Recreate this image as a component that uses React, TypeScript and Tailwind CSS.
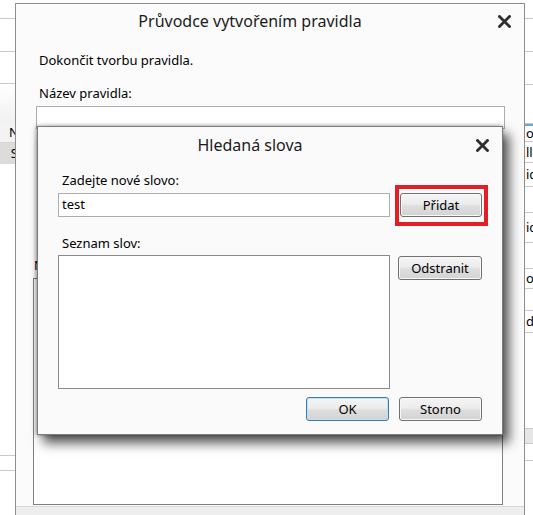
import React from "react";

const CloseX: React.FC = () => (
  <svg width="13" height="13" viewBox="0 0 13 13" className="block">
    <path d="M1.5 1.5 L11.5 11.5 M11.5 1.5 L1.5 11.5" stroke="#2e2e2e" strokeWidth="2.8" strokeLinecap="square" />
  </svg>
);

interface WinButtonProps {
  label: string;
  width: string;
  primary?: boolean;
}

const WinButton: React.FC<WinButtonProps> = ({ label, width, primary }) => (
  <button
    className={`${width} h-[24px] shrink-0 rounded-[3px] border text-[13px] leading-none text-black bg-[linear-gradient(to_bottom,#f5f5f5,#ececec_45%,#dedede_55%,#d3d3d3)] ${
      primary ? "border-[#3d7bad] shadow-[inset_0_0_0_1px_#bfe0f5]" : "border-[#707070] shadow-[inset_0_0_0_1px_#f8f8f8]"
    }`}
  >
    {label}
  </button>
);

const LeftStrip: React.FC = () => (
  <div className="w-[15px] shrink-0 flex flex-col overflow-hidden text-[13px] text-black">
    <div className="h-[19px] border-b border-[#c9c9c9]" />
    <div className="h-[33px] border-b border-[#c9c9c9]" />
    <div className="h-[32px] border-b border-[#c9c9c9]" />
    <div className="h-[39px] bg-[linear-gradient(to_bottom,#fff,#f1f1f1)]" />
    <div className="h-[20px] bg-[#f3f3f3] border-b border-[#d4d4d4] flex items-center justify-end pr-0 leading-none">
      <span className="translate-x-[4px]">N</span>
    </div>
    <div className="h-[21px] bg-[#dcdcdc] flex items-center justify-end leading-none">
      <span className="translate-x-[3px]">S</span>
    </div>
    <div className="h-[292px] border-b border-[#c9c9c9]" />
    <div className="h-[15px] border-b border-[#c9c9c9]" />
  </div>
);

const rightRows = [
  { h: "h-[33px]", t: "" },
  { h: "h-[33px]", t: "" },
  { h: "h-[39px]", t: "" },
  { h: "h-[18px]", t: "o", blue: true },
  { h: "h-[21px]", t: "ll" },
  { h: "h-[24px]", t: "id" },
  { h: "h-[26px]", t: "" },
  { h: "h-[30px]", t: "ic" },
  { h: "h-[26px]", t: "" },
  { h: "h-[20px]", t: "ol" },
  { h: "h-[22px]", t: "" },
  { h: "h-[22px]", t: "d" },
  { h: "h-[96px]", t: "" },
  { h: "h-[15px]", t: "", gray: true },
  { h: "h-[17px]", t: "" },
];

const RightStrip: React.FC = () => (
  <div className="flex-1 flex flex-col overflow-hidden text-[13px] text-black">
    <div className="h-[19px] border-b border-[#c9c9c9]" />
    {rightRows.map((r, i) => (
      <div
        key={i}
        className={`${r.h} shrink-0 border-b border-[#c9c9c9] flex items-center pl-[1px] leading-none whitespace-nowrap ${
          r.blue ? "border-t-2 border-t-[#6fa6d6]" : ""
        } ${r.gray ? "bg-[#e6e6e6]" : ""}`}
      >
        {r.t}
      </div>
    ))}
  </div>
);

const OuterDialog: React.FC = () => (
  <div className="w-[510px] shrink-0 mt-[3px] h-[530px] border border-[#8e8e8e] bg-[#fbfbfb] flex flex-col text-[13px] text-black">
    <div className="h-[34px] flex items-center shrink-0">
      <div className="flex-1 text-center text-[16px] text-[#1b1b1b]">Průvodce vytvořením pravidla</div>
      <div className="w-[40px] flex justify-center">
        <CloseX />
      </div>
    </div>
    <div className="flex flex-col px-[20px]">
      <div className="mt-[13px] leading-[18px] pl-[3px]">Dokončit tvorbu pravidla.</div>
      <div className="mt-[15px] leading-[18px] pl-[3px]">Název pravidla:</div>
      <div className="mt-[4px] h-[23px] w-[469px] bg-white border border-[#abadb3]" />
    </div>
    <div className="flex flex-col pl-[17px]">
      <div className="mt-[127px] leading-[18px] pl-[1px]">Náhled pravidla:</div>
      <div className="mt-[4px] h-[227px] w-[470px] bg-white border border-[#7f7f7f]" />
    </div>
    <div className="mt-[1px] h-[30px] bg-[#eeeeee] border-t border-[#d8d8d8]" />
  </div>
);

const InnerDialog: React.FC = () => (
  <div className="absolute left-[37px] top-[126px] w-[466px] h-[309px] bg-[#fafafa] border border-[#7c7c7c] shadow-[6px_8px_11px_rgba(0,0,0,0.68),-1px_0_4px_rgba(0,0,0,0.4)] flex flex-col text-[13px] text-black">
    <div className="h-[36px] flex items-center shrink-0">
      <div className="flex-1 text-center text-[16px] text-[#1b1b1b]">Hledaná slova</div>
      <div className="w-[40px] flex justify-center">
        <CloseX />
      </div>
    </div>
    <div className="flex flex-col px-[20px]">
      <div className="mt-[8px] leading-[18px] pl-[4px]">Zadejte nové slovo:</div>
      <div className="mt-[4px] flex items-center justify-between">
        <div className="w-[332px] h-[24px] bg-white border border-[#abadb3] flex items-center pl-[3px]">test</div>
        <div className="relative">
          <WinButton label="Přidat" width="w-[82px]" />
          <span className="absolute -left-[5px] -right-[6px] -top-[8px] -bottom-[9px] border-[4px] border-[#e21f26]" />
        </div>
      </div>
      <div className="mt-[17px] leading-[18px] pl-[4px]">Seznam slov:</div>
      <div className="mt-[3px] flex items-start justify-between">
        <div className="w-[332px] h-[134px] bg-white border border-[#8a8a8a]" />
        <div className="mt-[1px]">
          <WinButton label="Odstranit" width="w-[84px]" />
        </div>
      </div>
      <div className="mt-[8px] flex justify-end gap-[10px]">
        <WinButton label="OK" width="w-[83px]" primary />
        <WinButton label="Storno" width="w-[83px]" />
      </div>
    </div>
  </div>
);

export default function App() {
  return (
    <div className="relative w-[533px] h-[515px] overflow-hidden bg-white font-['Noto_Sans','Open_Sans',sans-serif]">
      <div className="flex h-full">
        <LeftStrip />
        <OuterDialog />
        <RightStrip />
      </div>
      <InnerDialog />
    </div>
  );
}
